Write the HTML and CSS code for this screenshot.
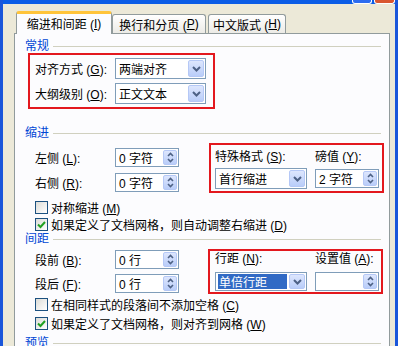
FILE: index.html
```html
<!DOCTYPE html>
<html lang="zh-CN">
<head>
<meta charset="utf-8">
<title>段落</title>
<link rel="stylesheet" href="styles.css">
</head>
<body>
<div class="win">
  <div class="titlebar"><span class="capbtn capbtn-max"></span><span class="capbtn capbtn-close"></span></div>
  <div class="tabs">
    <div class="tab tab-1 active">缩进和间距 (<u>I</u>)</div>
    <div class="tab tab-2">换行和分页 (<u>P</u>)</div>
    <div class="tab tab-3">中文版式 (<u>H</u>)</div>
  </div>
  <div class="panel">
    <div class="group"><span>常规</span></div>
    <div class="redbox rb-general">
      <div class="row">
        <span class="lbl">对齐方式 (<u>G</u>):</span>
        <div class="combo w91"><span class="val">两端对齐</span><span class="dbtn"><svg width="9" height="6" viewBox="0 0 9 6"><path d="M1 1l3.5 3.5L8 1" fill="none" stroke="#4D6185" stroke-width="2"/></svg></span></div>
      </div>
      <div class="row">
        <span class="lbl">大纲级别 (<u>O</u>):</span>
        <div class="combo w91"><span class="val">正文文本</span><span class="dbtn"><svg width="9" height="6" viewBox="0 0 9 6"><path d="M1 1l3.5 3.5L8 1" fill="none" stroke="#4D6185" stroke-width="2"/></svg></span></div>
      </div>
    </div>

    <div class="group group-indent"><span>缩进</span></div>
    <div class="sec sec-indent">
      <div class="sec-left">
        <div class="frow">
          <span class="lbl">左侧 (<u>L</u>):</span>
          <div class="spin"><span class="val">0 字符</span><span class="sbtn"><svg width="7" height="11" viewBox="0 0 7 11"><path d="M1 4l2.5-2.5L6 4M1 7l2.5 2.5L6 7" fill="none" stroke="#4D6185" stroke-width="1.6"/></svg></span></div>
        </div>
        <div class="frow">
          <span class="lbl">右侧 (<u>R</u>):</span>
          <div class="spin"><span class="val">0 字符</span><span class="sbtn"><svg width="7" height="11" viewBox="0 0 7 11"><path d="M1 4l2.5-2.5L6 4M1 7l2.5 2.5L6 7" fill="none" stroke="#4D6185" stroke-width="1.6"/></svg></span></div>
        </div>
      </div>
      <div class="redbox rb-indent">
        <span class="lbl2">特殊格式 (<u>S</u>):</span>
        <span class="lbl2">磅值 (<u>Y</u>):</span>
        <div class="combo w92 h21"><span class="val">首行缩进</span><span class="dbtn"><svg width="9" height="6" viewBox="0 0 9 6"><path d="M1 1l3.5 3.5L8 1" fill="none" stroke="#4D6185" stroke-width="2"/></svg></span></div>
        <div class="spin"><span class="val">2 字符</span><span class="sbtn"><svg width="7" height="11" viewBox="0 0 7 11"><path d="M1 4l2.5-2.5L6 4M1 7l2.5 2.5L6 7" fill="none" stroke="#4D6185" stroke-width="1.6"/></svg></span></div>
      </div>
    </div>
    <div class="chks chks-indent">
      <div class="chk"><span class="box"></span><span>对称缩进 (<u>M</u>)</span></div>
      <div class="chk"><span class="box"><svg width="11" height="11" viewBox="0 0 11 11"><path d="M2 5.5l2.5 2.5L9 3" fill="none" stroke="#21A121" stroke-width="2"/></svg></span><span>如果定义了文档网格，则自动调整右缩进 (<u>D</u>)</span></div>
    </div>

    <div class="group group-spacing"><span>间距</span></div>
    <div class="sec sec-spacing">
      <div class="sec-left">
        <div class="frow">
          <span class="lbl">段前 (<u>B</u>):</span>
          <div class="spin"><span class="val">0 行</span><span class="sbtn"><svg width="7" height="11" viewBox="0 0 7 11"><path d="M1 4l2.5-2.5L6 4M1 7l2.5 2.5L6 7" fill="none" stroke="#4D6185" stroke-width="1.6"/></svg></span></div>
        </div>
        <div class="frow">
          <span class="lbl">段后 (<u>F</u>):</span>
          <div class="spin"><span class="val">0 行</span><span class="sbtn"><svg width="7" height="11" viewBox="0 0 7 11"><path d="M1 4l2.5-2.5L6 4M1 7l2.5 2.5L6 7" fill="none" stroke="#4D6185" stroke-width="1.6"/></svg></span></div>
        </div>
      </div>
      <div class="redbox rb-spacing">
        <span class="lbl2">行距 (<u>N</u>):</span>
        <span class="lbl2">设置值 (<u>A</u>):</span>
        <div class="combo w92 h19"><span class="val sel">单倍行距</span><span class="dbtn"><svg width="9" height="6" viewBox="0 0 9 6"><path d="M1 1l3.5 3.5L8 1" fill="none" stroke="#4D6185" stroke-width="2"/></svg></span></div>
        <div class="spin"><span class="val"></span><span class="sbtn"><svg width="7" height="11" viewBox="0 0 7 11"><path d="M1 4l2.5-2.5L6 4M1 7l2.5 2.5L6 7" fill="none" stroke="#4D6185" stroke-width="1.6"/></svg></span></div>
      </div>
    </div>
    <div class="chks chks-spacing">
      <div class="chk"><span class="box"></span><span>在相同样式的段落间不添加空格 (<u>C</u>)</span></div>
      <div class="chk"><span class="box"><svg width="11" height="11" viewBox="0 0 11 11"><path d="M2 5.5l2.5 2.5L9 3" fill="none" stroke="#21A121" stroke-width="2"/></svg></span><span>如果定义了文档网格，则对齐到网格 (<u>W</u>)</span></div>
    </div>

    <div class="group group-preview"><span>预览</span></div>
  </div>
</div>
</body>
</html>
```
FILE: styles.css
```css
html, body {
  margin: 0;
  padding: 0;
}
body {
  width: 398px;
  height: 346px;
  overflow: hidden;
  background: #ECE9D8;
  font: 12px "Liberation Sans", "Noto Sans CJK SC", sans-serif;
  color: #000;
}
u { text-decoration: underline; }

.win {
  height: 346px;
  box-sizing: border-box;
  border-left: 3px solid #1A56DA;
  border-right: 3px solid #1A56DA;
  background: #ECE9D8;
  overflow: hidden;
}
.titlebar {
  height: 4px;
  background: #0B5DE6;
  display: flex;
  justify-content: flex-end;
  gap: 2px;
  padding-right: 0;
}
.capbtn {
  height: 3px;
  border: 1px solid #fff;
  border-top: none;
  border-radius: 0 0 3px 3px;
}
.capbtn-max { width: 18px; background: #2C6CF0; }
.capbtn-close { width: 19px; background: #D9562F; }

/* tabs */
.tabs {
  display: flex;
  align-items: flex-end;
  height: 22px;
  margin: 7px 0 0 13px;
}
.tab {
  box-sizing: border-box;
  height: 19px;
  border: 1px solid #919B9C;
  border-bottom: none;
  border-radius: 3px 3px 0 0;
  background: linear-gradient(#FFFFFF, #ECEBE6);
  display: flex;
  align-items: center;
  justify-content: center;
  white-space: nowrap;
}
.tab.active {
  height: 23px;
  background: #FCFCFE;
  border-top: 3px solid #FFC43A;
  margin-bottom: -1px;
  position: relative;
  z-index: 1;
  padding-bottom: 1px;
}
.tab-1 { width: 96px; }
.tab-2 { width: 94px; }
.tab-3 { width: 78px; margin-left: 2px; }

/* panel */
.panel {
  margin-left: 11px;
  width: 376px;
  height: 330px;
  box-sizing: border-box;
  border: 1px solid #919B9C;
  background: #FCFCFE;
}
.group {
  display: flex;
  align-items: center;
  height: 13px;
  line-height: 13px;
  margin: 6px 8px 0 10px;
  color: #0046D5;
}
.group::after {
  content: "";
  flex: 1;
  height: 1px;
  background: #D0D0BF;
  margin-left: 4px;
}
.group-indent { margin-top: 18px; }
.group-spacing { margin-top: 0; }
.group-preview { margin-top: 4px; }

.redbox {
  box-sizing: border-box;
  border: 2px solid #E3181E;
}
.rb-general {
  margin-left: 13px;
  width: 187px;
  height: 56px;
  padding: 3px 0 0 5px;
  display: flex;
  flex-direction: column;
  gap: 4px;
}
.row {
  display: flex;
  align-items: center;
  height: 21px;
}
.lbl {
  width: 80px;
  flex: none;
  white-space: nowrap;
}

/* combo */
.combo {
  display: flex;
  align-items: center;
  box-sizing: border-box;
  height: 21px;
  border: 1px solid #7F9DB9;
  background: #fff;
  padding: 0 1px 0 2px;
  white-space: nowrap;
}
.w91 { width: 91px; }
.w92 { width: 92px; }
.h21 { height: 21px; }
.h19 { height: 19px; }
.combo .val {
  flex: 1;
  padding-left: 1px;
}
.combo .val.sel {
  background: #316AC5;
  color: #fff;
  align-self: stretch;
  display: flex;
  align-items: center;
  margin: 1px 2px 1px 0;
}
.dbtn {
  flex: none;
  width: 16px;
  height: 17px;
  box-sizing: border-box;
  border: 1px solid #B5C8F6;
  border-radius: 2px;
  background: linear-gradient(#DDE6FD, #B9CDF9);
  display: flex;
  align-items: center;
  justify-content: center;
}
.h19 .dbtn { height: 15px; }

/* spin */
.spin {
  display: flex;
  align-items: center;
  box-sizing: border-box;
  width: 64px;
  height: 19px;
  border: 1px solid #7F9DB9;
  background: #fff;
  padding: 0 1px 0 3px;
  white-space: nowrap;
}
.spin .val { flex: 1; }
.sbtn {
  flex: none;
  width: 14px;
  height: 15px;
  box-sizing: border-box;
  border: 1px solid #B5C8F6;
  border-radius: 2px;
  background: linear-gradient(#DDE6FD, #B9CDF9);
  display: flex;
  align-items: center;
  justify-content: center;
}

/* sections */
.sec {
  display: flex;
  margin-top: 3px;
}
.sec-left {
  flex: none;
  box-sizing: border-box;
  padding-left: 20px;
  display: flex;
  flex-direction: column;
}
.frow {
  display: flex;
  align-items: center;
  height: 19px;
}
.sec-indent .sec-left { width: 194px; padding-top: 5px; gap: 6px; }
.sec-spacing .sec-left { width: 193px; padding-top: 1px; gap: 5px; }

.rb-indent, .rb-spacing {
  width: 175px;
  display: grid;
  grid-template-columns: 100px 64px;
  align-items: center;
  align-content: start;
}
.rb-indent {
  height: 50px;
  padding: 5px 0 0 4px;
  grid-template-rows: 14px 21px;
  row-gap: 4px;
}
.rb-spacing {
  height: 45px;
  padding: 1px 0 0 5px;
  grid-template-rows: 14px 19px;
  row-gap: 6px;
}
.lbl2 {
  white-space: nowrap;
  line-height: 14px;
}

/* checkboxes */
.chks {
  margin-left: 20px;
  display: flex;
  flex-direction: column;
}
.chks-indent { margin-top: 6px; }
.chks-indent .chk { height: 17px; }
.chks-spacing { margin-top: 1px; }
.chks-spacing .chk { height: 19px; }
.chk {
  display: flex;
  align-items: center;
  gap: 3px;
  white-space: nowrap;
}
.box {
  flex: none;
  width: 13px;
  height: 13px;
  box-sizing: border-box;
  border: 1px solid #1C5180;
  background: linear-gradient(135deg, #DCDCD7, #FFFFFF);
  display: flex;
  align-items: center;
  justify-content: center;
}
```
